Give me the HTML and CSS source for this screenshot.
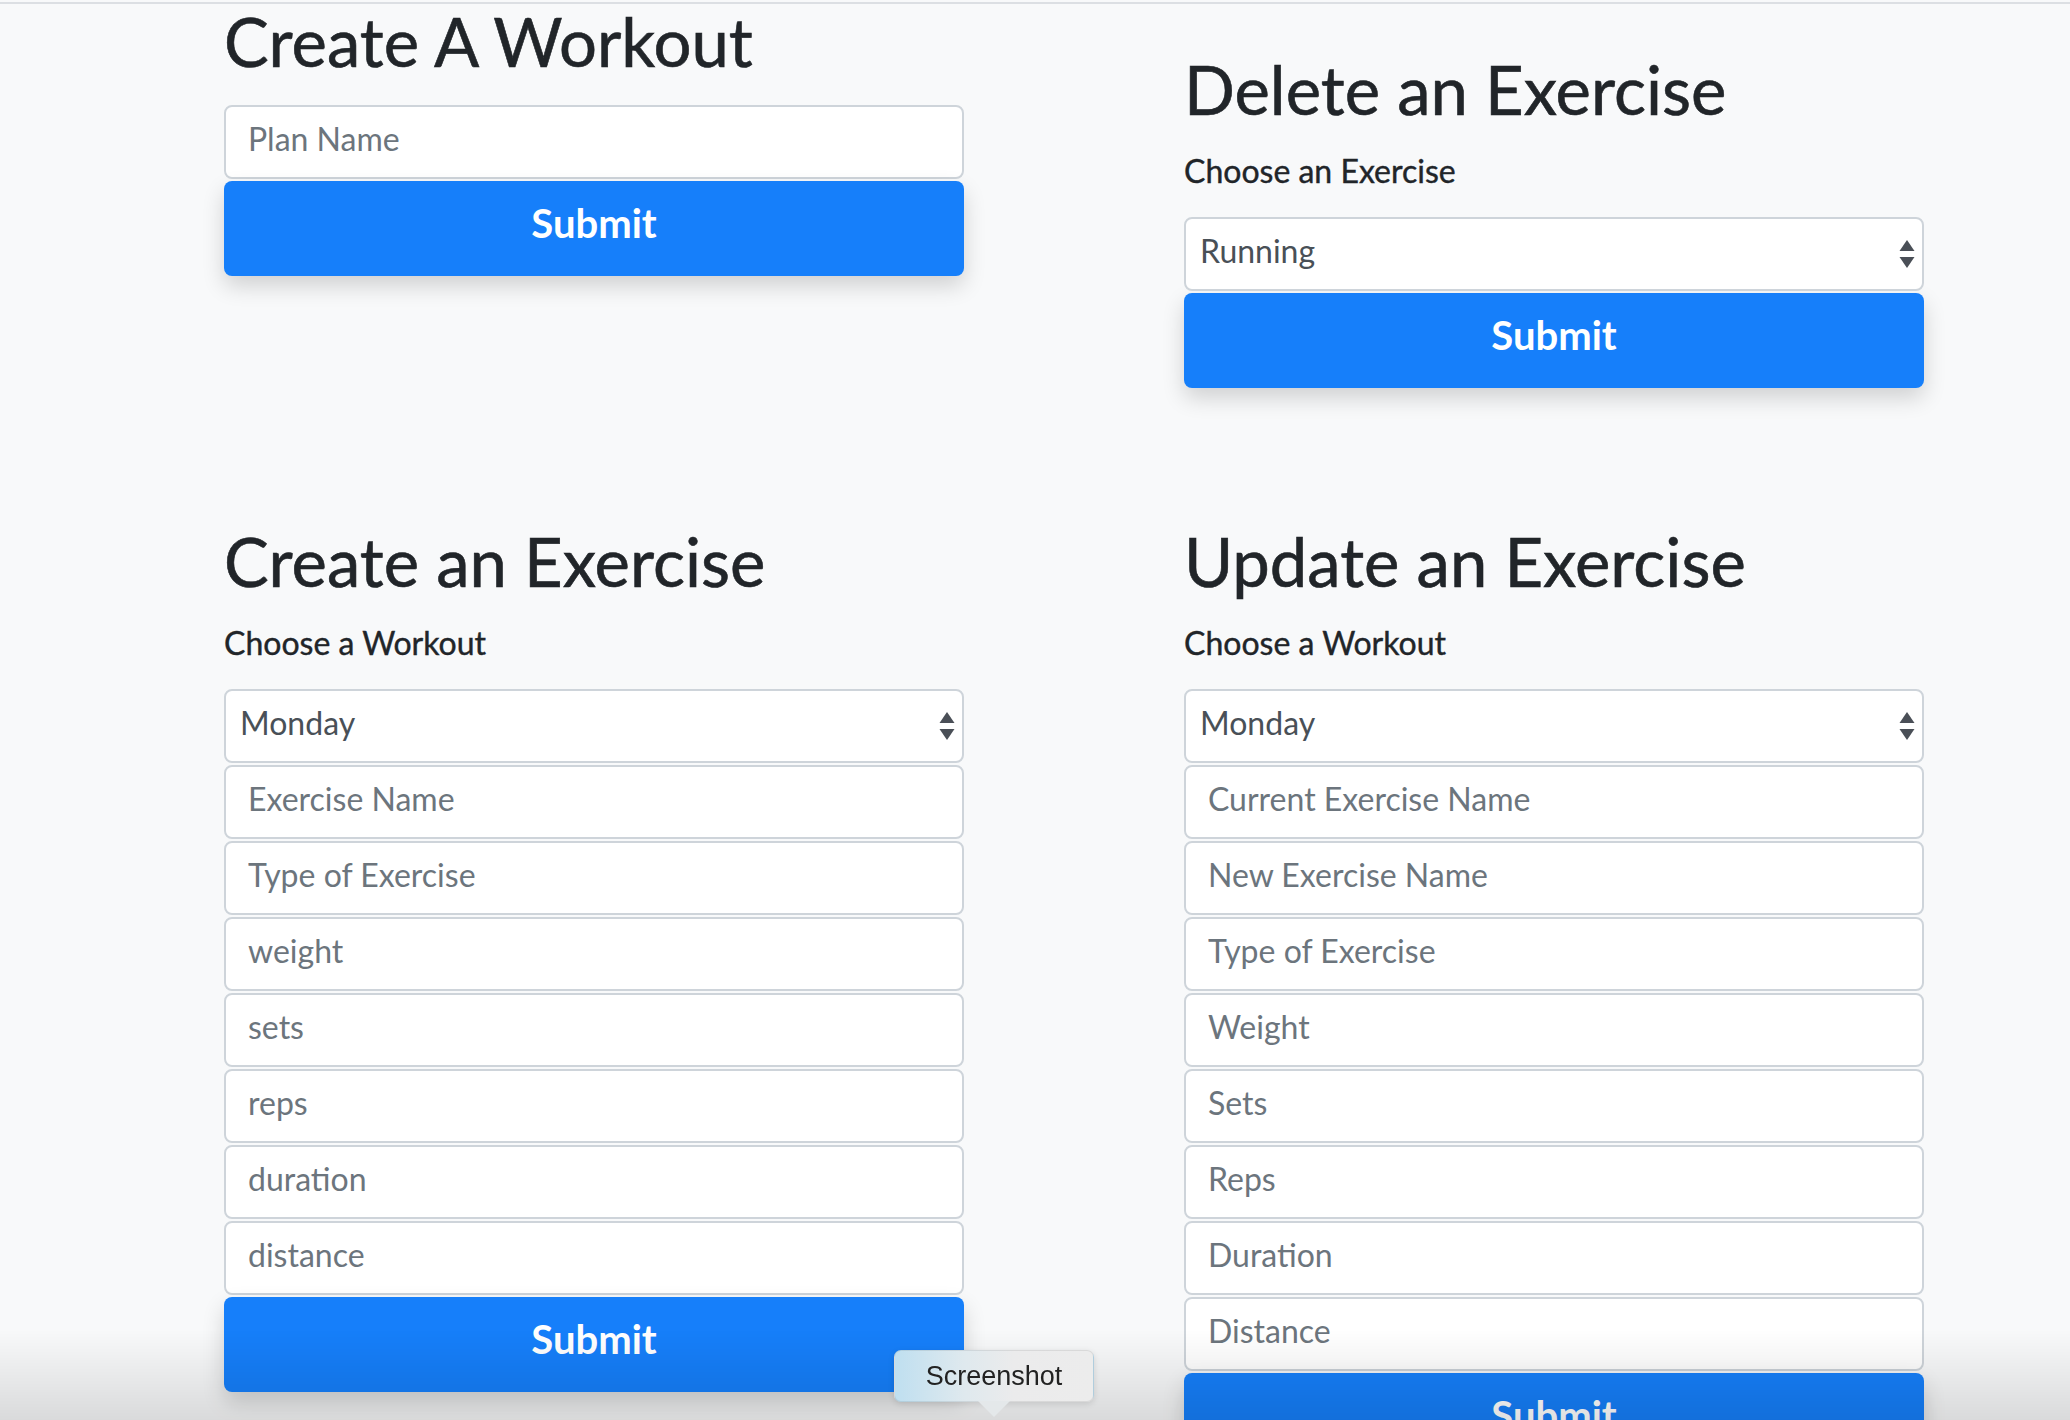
FILE: index.html
```html
<!DOCTYPE html>
<html lang="en">
<head>
<meta charset="utf-8">
<title>Workouts</title>
<link rel="stylesheet" href="styles.css">
</head>
<body>
<div class="topline"></div>
<main class="page">
  <div class="row row-first">
    <section class="col col-create-workout">
      <h1 class="title title-tight">Create A Workout</h1>
      <form class="form">
        <input class="field" type="text" placeholder="Plan Name">
        <button class="btn" type="button">Submit</button>
      </form>
    </section>
    <section class="col col-delete">
      <h1 class="title">Delete an Exercise</h1>
      <label class="label">Choose an Exercise</label>
      <form class="form">
        <div class="select-wrap">
          <select class="field select"><option>Running</option></select>
          <svg class="arrows" width="16" height="29" viewBox="0 0 16 29"><path d="M8 0 L15.5 11 L0.5 11 Z" fill="#4a4f57"/><path d="M0.5 17 L15.5 17 L8 28 Z" fill="#4a4f57"/></svg>
        </div>
        <button class="btn" type="button">Submit</button>
      </form>
    </section>
  </div>
  <div class="row row-second">
    <section class="col">
      <h1 class="title">Create an Exercise</h1>
      <label class="label">Choose a Workout</label>
      <form class="form">
        <div class="select-wrap">
          <select class="field select"><option>Monday</option></select>
          <svg class="arrows" width="16" height="29" viewBox="0 0 16 29"><path d="M8 0 L15.5 11 L0.5 11 Z" fill="#4a4f57"/><path d="M0.5 17 L15.5 17 L8 28 Z" fill="#4a4f57"/></svg>
        </div>
        <input class="field" type="text" placeholder="Exercise Name">
        <input class="field" type="text" placeholder="Type of Exercise">
        <input class="field" type="text" placeholder="weight">
        <input class="field" type="text" placeholder="sets">
        <input class="field" type="text" placeholder="reps">
        <input class="field" type="text" placeholder="duration">
        <input class="field" type="text" placeholder="distance">
        <button class="btn" type="button">Submit</button>
      </form>
    </section>
    <section class="col">
      <h1 class="title">Update an Exercise</h1>
      <label class="label">Choose a Workout</label>
      <form class="form">
        <div class="select-wrap">
          <select class="field select"><option>Monday</option></select>
          <svg class="arrows" width="16" height="29" viewBox="0 0 16 29"><path d="M8 0 L15.5 11 L0.5 11 Z" fill="#4a4f57"/><path d="M0.5 17 L15.5 17 L8 28 Z" fill="#4a4f57"/></svg>
        </div>
        <input class="field" type="text" placeholder="Current Exercise Name">
        <input class="field" type="text" placeholder="New Exercise Name">
        <input class="field" type="text" placeholder="Type of Exercise">
        <input class="field" type="text" placeholder="Weight">
        <input class="field" type="text" placeholder="Sets">
        <input class="field" type="text" placeholder="Reps">
        <input class="field" type="text" placeholder="Duration">
        <input class="field" type="text" placeholder="Distance">
        <button class="btn" type="button">Submit</button>
      </form>
    </section>
  </div>
</main>
<div class="dock-shade"></div>
<div class="tooltip">Screenshot<span class="tip-arrow"></span></div>
</body>
</html>
```

FILE: styles.css
```css
html {
  overflow: hidden;
}

body {
  margin: 0;
  background: #f8f9fa;
  color: #212529;
  font-family: "Lato", "Noto Sans", sans-serif;
}

.topline {
  height: 2px;
  margin-top: 2px;
  background: #dcdfe3;
}

.page {
  padding-left: 224px;
}

.row {
  display: grid;
  grid-template-columns: 740px 740px;
  column-gap: 220px;
  align-items: start;
}

.row-second {
  margin-top: 140px;
}

.col-create-workout {
  padding-top: 4px;
}

.col-delete {
  padding-top: 52px;
}

.title {
  margin: 0 0 32px;
  font-size: 67px;
  line-height: 67px;
  font-weight: 400;
  color: #212529;
  -webkit-text-stroke: 0.6px #212529;
}

.title-tight {
  margin-bottom: 30px;
}

.label {
  display: block;
  margin-bottom: 30px;
  font-size: 32px;
  line-height: 32px;
  font-weight: 400;
  color: #212529;
  -webkit-text-stroke: 0.4px #212529;
}

.form {
  display: flex;
  flex-direction: column;
  gap: 2px;
}

.field {
  box-sizing: border-box;
  width: 100%;
  height: 74px;
  margin: 0;
  padding: 0 22px 8px;
  border: 2px solid #ced4da;
  border-radius: 8px;
  background: #fff;
  font-family: "Lato", "Noto Sans", sans-serif;
  font-size: 32px;
  color: #495057;
  outline: none;
}

.field::placeholder {
  color: #6c757d;
  opacity: 1;
}

.select-wrap {
  position: relative;
}

.select {
  display: block;
  appearance: none;
  -webkit-appearance: none;
  padding-left: 14px;
  padding-right: 40px;
}

.arrows {
  position: absolute;
  right: 9px;
  top: 23px;
  pointer-events: none;
}

.btn {
  box-sizing: border-box;
  width: 100%;
  height: 95px;
  margin: 0;
  padding: 0 0 10px;
  border: none;
  border-radius: 8px;
  background: #167ffa;
  color: #fff;
  font-family: "Lato", "Noto Sans", sans-serif;
  font-size: 40px;
  line-height: 85px;
  font-weight: 700;
  box-shadow: 0 10px 22px rgba(0, 0, 0, 0.16);
}

.dock-shade {
  position: fixed;
  left: 0;
  right: 0;
  bottom: 0;
  height: 90px;
  background: linear-gradient(to bottom, rgba(0, 0, 0, 0), rgba(0, 0, 0, 0.12));
  pointer-events: none;
}

.tooltip {
  position: fixed;
  left: 894px;
  top: 1350px;
  box-sizing: border-box;
  width: 200px;
  height: 52px;
  padding-top: 9px;
  border: 1px solid rgba(0, 0, 0, 0.08);
  border-radius: 7px;
  background: linear-gradient(to right, #bfdff0 0%, #dfe9ee 35%, #ebebec 60%, #ececec 100%);
  font-family: "Liberation Sans", Arial, sans-serif;
  font-size: 27px;
  line-height: 32px;
  color: #222;
  text-align: center;
  box-shadow: 0 2px 6px rgba(0, 0, 0, 0.12);
}

.tip-arrow {
  position: absolute;
  left: 83px;
  top: 50px;
  width: 0;
  height: 0;
  border-left: 16px solid transparent;
  border-right: 16px solid transparent;
  border-top: 16px solid #e4e8ea;
}
```
